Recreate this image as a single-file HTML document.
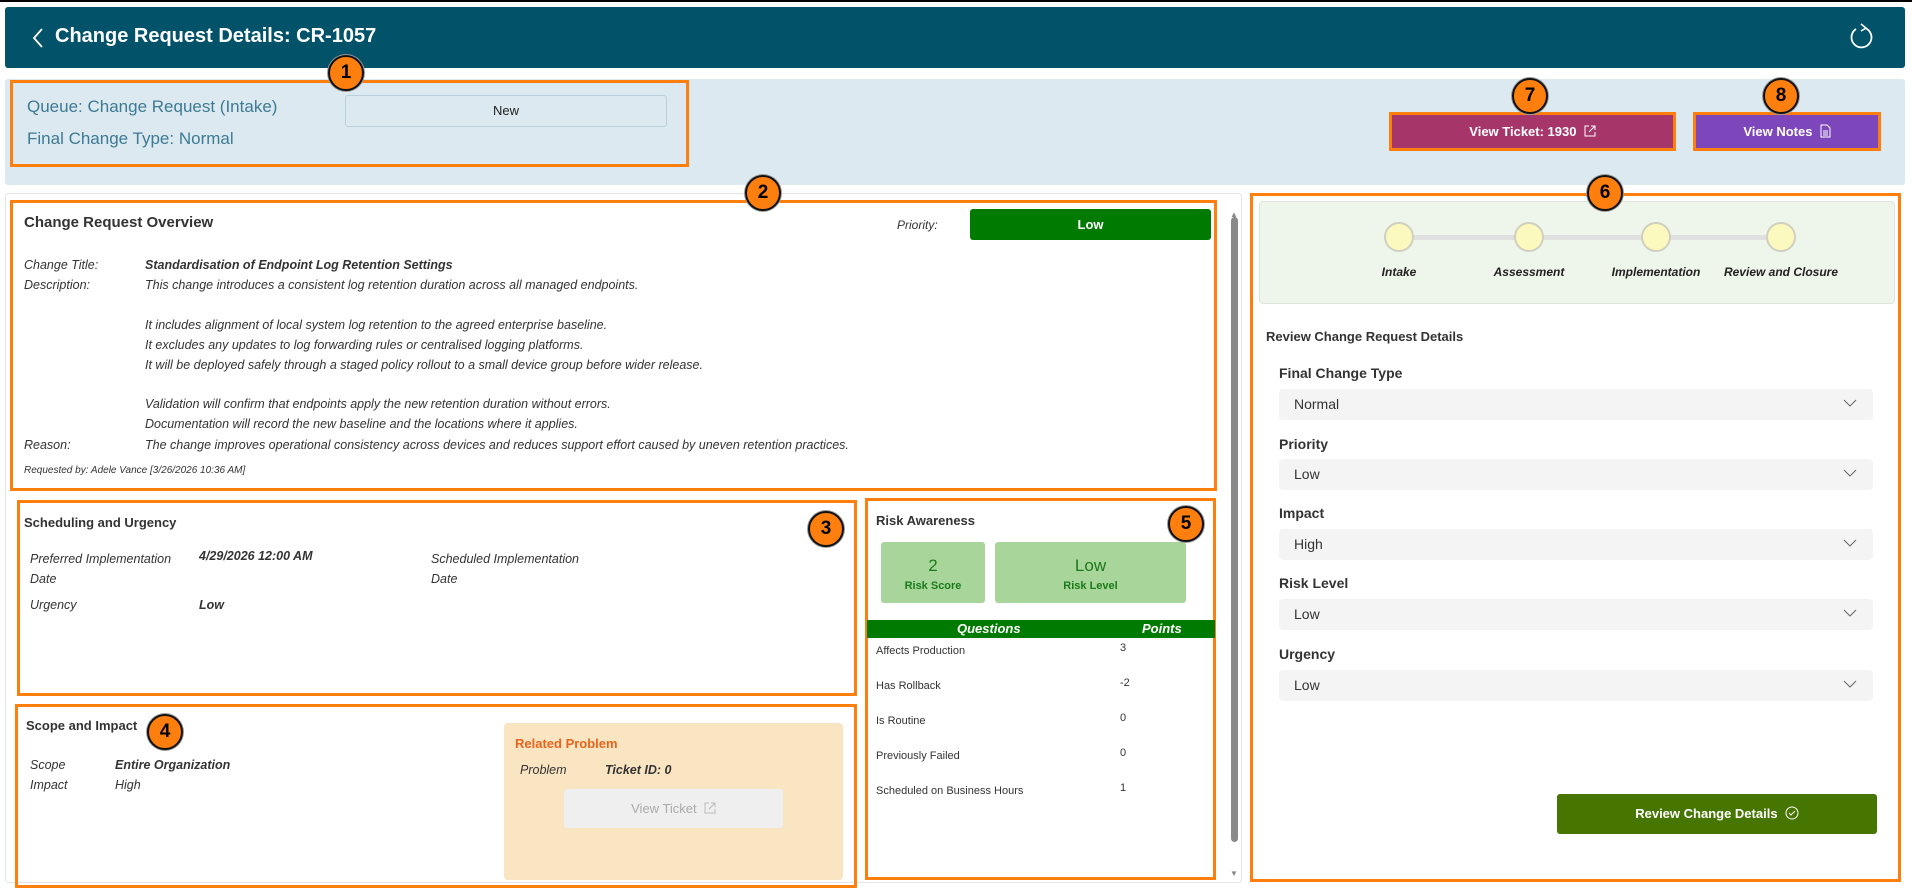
<!DOCTYPE html>
<html><head><meta charset="utf-8"><style>
*{box-sizing:border-box;margin:0;padding:0}
body{width:1912px;height:893px;background:#fff;font-family:"Liberation Sans",sans-serif;position:relative;overflow:hidden;color:#242424}
.a{position:absolute}
.ob{position:absolute;border:3px solid #ff7f0e}
.bd{position:absolute;width:36px;height:36px;border-radius:50%;background:#ff7f0e;border:2px solid #111;box-shadow:0 0 0 1px #999;font:bold 19px "Liberation Sans",sans-serif;color:#000;text-align:center;line-height:32px;z-index:5;margin:-18px 0 0 -18px}
.it{font-style:italic;font-size:12.5px;color:#333}
.dd{position:absolute;left:1279px;width:594px;height:31px;background:#f4f4f4;border-radius:4px;font-size:14px;line-height:31px;padding-left:15px;color:#333}
.dd svg{position:absolute;right:16px;top:10px}
.fl{position:absolute;left:1279px;font-size:14px;font-weight:bold;color:#333}
.st{position:absolute;width:30px;height:30px;border-radius:50%;background:#fbf9bd;border:2px solid #d0d0c0;top:222px}
.sl{position:absolute;top:265px;font-size:12px;font-style:italic;font-weight:bold;color:#222;width:160px;text-align:center}
.q{position:absolute;left:876px;font-size:11px;color:#333}
.p{position:absolute;left:1120px;font-size:11px;color:#333}
</style></head><body>
<div class="a" style="left:0;top:0;width:1912px;height:2px;background:#000"></div>
<div class="a" style="left:5px;top:7px;width:1900px;height:61px;background:#02536a;border-radius:3px"></div>
<svg class="a" style="left:32px;top:28px" width="12" height="20"><path d="M10 1 L2 10 L10 19" stroke="#fff" stroke-width="1.8" fill="none"/></svg>
<div class="a" style="left:55px;top:25px;font-size:20px;font-weight:bold;color:#fff">Change Request Details: CR-1057</div>
<svg class="a" style="left:1846px;top:22px" width="30" height="30"><path d="M10 7 A10 10 0 1 0 19 6" stroke="#fff" stroke-width="1.8" fill="none"/><path d="M15 2 L20 6 L15 9" stroke="#fff" stroke-width="1.6" fill="none"/></svg>

<div class="a" style="left:5px;top:79px;width:1900px;height:106px;background:#dce9f0;border-radius:3px"></div>
<div class="ob" style="left:10px;top:80px;width:679px;height:87px"></div>
<div class="bd" style="left:346px;top:73px">1</div>
<div class="a" style="left:27px;top:97px;font-size:17px;color:#3d7a94">Queue: Change Request (Intake)</div>
<div class="a" style="left:27px;top:129px;font-size:17px;color:#3d7a94">Final Change Type: Normal</div>
<div class="a" style="left:345px;top:95px;width:322px;height:32px;border:1px solid #b9cfdc;border-radius:3px;text-align:center;line-height:30px;font-size:13px;color:#222">New</div>
<div class="a" style="left:1389px;top:112px;width:287px;height:39px;background:#a6366a;border:3px solid #ff7f0e;color:#fff;font-size:13px;font-weight:bold;text-align:center;line-height:33px">View Ticket: 1930 &nbsp;<svg width="12" height="12" style="vertical-align:-1px"><path d="M5 1H1V11H11V7M7 1H11V5M11 1L5 7" stroke="#fff" fill="none"/></svg></div>
<div class="a" style="left:1693px;top:112px;width:188px;height:39px;background:#7d47bb;border:3px solid #ff7f0e;color:#fff;font-size:13px;font-weight:bold;text-align:center;line-height:33px">View Notes &nbsp;<svg width="11" height="14" style="vertical-align:-2px"><path d="M1 1H7L10 4V13H1Z M3 7H8M3 9H8M3 11H8" stroke="#fff" fill="none"/></svg></div>
<div class="bd" style="left:1530px;top:96px">7</div>
<div class="bd" style="left:1781px;top:96px">8</div>

<!-- left panel -->
<div class="a" style="left:5px;top:193px;width:1237px;height:690px;border:1px solid #e4e4e4;border-radius:3px"></div>
<div class="ob" style="left:10px;top:200px;width:1207px;height:291px"></div>
<div class="bd" style="left:763px;top:193px">2</div>
<div class="a" style="left:24px;top:214px;font-size:15px;font-weight:bold;color:#333">Change Request Overview</div>
<div class="a it" style="left:897px;top:218px;font-size:12px">Priority:</div>
<div class="a" style="left:970px;top:209px;width:241px;height:31px;background:#007a00;border-radius:3px;color:#fff;font-weight:bold;font-size:13px;text-align:center;line-height:31px">Low</div>
<div class="a it" style="left:24px;top:255px;line-height:20px">Change Title:<br>Description:</div>
<div class="a it" style="left:145px;top:255px;line-height:20px"><b>Standardisation of Endpoint Log Retention Settings</b><br>This change introduces a consistent log retention duration across all managed endpoints.</div>
<div class="a it" style="left:145px;top:315px;line-height:20px">It includes alignment of local system log retention to the agreed enterprise baseline.<br>It excludes any updates to log forwarding rules or centralised logging platforms.<br>It will be deployed safely through a staged policy rollout to a small device group before wider release.</div>
<div class="a it" style="left:145px;top:394px;line-height:20px">Validation will confirm that endpoints apply the new retention duration without errors.<br>Documentation will record the new baseline and the locations where it applies.</div>
<div class="a it" style="left:24px;top:438px">Reason:</div>
<div class="a it" style="left:145px;top:438px">The change improves operational consistency across devices and reduces support effort caused by uneven retention practices.</div>
<div class="a it" style="left:24px;top:465px;font-size:10px">Requested by: Adele Vance [3/26/2026 10:36 AM]</div>
<div class="a" style="left:1230px;top:210px;font-size:8px;color:#888">▲</div>
<div class="a" style="left:1231px;top:217px;width:7px;height:625px;background:#8a8a8a;border-radius:4px"></div>
<div class="a" style="left:1230px;top:869px;font-size:8px;color:#888">▼</div>

<div class="ob" style="left:17px;top:500px;width:840px;height:196px"></div>
<div class="bd" style="left:826px;top:529px">3</div>
<div class="a" style="left:24px;top:515px;font-size:13px;font-weight:bold;color:#333">Scheduling and Urgency</div>
<div class="a it" style="left:30px;top:549px;line-height:20px">Preferred Implementation<br>Date</div>
<div class="a it" style="left:199px;top:549px"><b>4/29/2026 12:00 AM</b></div>
<div class="a it" style="left:431px;top:549px;line-height:20px">Scheduled Implementation<br>Date</div>
<div class="a it" style="left:30px;top:598px">Urgency</div>
<div class="a it" style="left:199px;top:598px"><b>Low</b></div>

<div class="ob" style="left:15px;top:704px;width:842px;height:184px"></div>
<div class="a" style="left:26px;top:718px;font-size:13px;font-weight:bold;color:#333">Scope and Impact</div>
<div class="bd" style="left:165px;top:732px">4</div>
<div class="a it" style="left:30px;top:755px;line-height:20px">Scope<br>Impact</div>
<div class="a it" style="left:115px;top:755px;line-height:20px"><b>Entire Organization</b><br>High</div>
<div class="a" style="left:504px;top:723px;width:339px;height:157px;background:#fae5c3;border-radius:4px"></div>
<div class="a" style="left:515px;top:736px;font-size:13px;font-weight:bold;color:#e8641c">Related Problem</div>
<div class="a it" style="left:520px;top:763px">Problem</div>
<div class="a it" style="left:605px;top:763px"><b>Ticket ID: 0</b></div>
<div class="a" style="left:564px;top:789px;width:219px;height:39px;background:#efefef;border-radius:3px;color:#aaa;font-size:13px;text-align:center;line-height:39px">View Ticket &nbsp;<svg width="12" height="12" style="vertical-align:-1px"><path d="M5 1H1V11H11V7M7 1H11V5M11 1L5 7" stroke="#bbb" fill="none"/></svg></div>

<div class="ob" style="left:865px;top:498px;width:351px;height:382px"></div>
<div class="bd" style="left:1186px;top:524px">5</div>
<div class="a" style="left:876px;top:513px;font-size:13px;font-weight:bold;color:#333">Risk Awareness</div>
<div class="a" style="left:881px;top:542px;width:104px;height:61px;background:#a8d69a;border-radius:3px;text-align:center;color:#1b7a1b"><div style="font-size:17px;margin-top:14px">2</div><div style="font-size:11px;font-weight:bold;margin-top:4px">Risk Score</div></div>
<div class="a" style="left:995px;top:542px;width:191px;height:61px;background:#a8d69a;border-radius:3px;text-align:center;color:#1b7a1b"><div style="font-size:17px;margin-top:14px">Low</div><div style="font-size:11px;font-weight:bold;margin-top:4px">Risk Level</div></div>
<div class="a" style="left:867px;top:620px;width:348px;height:18px;background:#007a00;color:#fff;font-size:13px;font-style:italic;font-weight:bold;line-height:18px"><span class="a" style="left:90px">Questions</span><span class="a" style="left:275px">Points</span></div>
<div class="q" style="top:645px">Affects Production</div><div class="p" style="top:642px">3</div>
<div class="q" style="top:680px">Has Rollback</div><div class="p" style="top:677px">-2</div>
<div class="q" style="top:715px">Is Routine</div><div class="p" style="top:712px">0</div>
<div class="q" style="top:750px">Previously Failed</div><div class="p" style="top:747px">0</div>
<div class="q" style="top:785px">Scheduled on Business Hours</div><div class="p" style="top:782px">1</div>

<!-- right -->
<div class="ob" style="left:1250px;top:193px;width:651px;height:689px"></div>
<div class="bd" style="left:1605px;top:193px">6</div>
<div class="a" style="left:1259px;top:201px;width:636px;height:103px;background:#eef5ea;border:1px solid #dde6da;border-radius:4px"></div>
<div class="a" style="left:1414px;top:235px;width:368px;height:5px;background:#e0e0e0"></div>
<div class="st" style="left:1384px"></div><div class="st" style="left:1514px"></div><div class="st" style="left:1641px"></div><div class="st" style="left:1766px"></div>
<div class="sl" style="left:1319px">Intake</div><div class="sl" style="left:1449px">Assessment</div><div class="sl" style="left:1576px">Implementation</div><div class="sl" style="left:1701px">Review and Closure</div>
<div class="a" style="left:1266px;top:329px;font-size:13px;font-weight:bold;color:#333">Review Change Request Details</div>
<div class="fl" style="top:365px">Final Change Type</div>
<div class="dd" style="top:389px">Normal<svg width="14" height="9"><path d="M1 1L7 7L13 1" stroke="#666" fill="none"/></svg></div>
<div class="fl" style="top:436px">Priority</div>
<div class="dd" style="top:459px">Low<svg width="14" height="9"><path d="M1 1L7 7L13 1" stroke="#666" fill="none"/></svg></div>
<div class="fl" style="top:505px">Impact</div>
<div class="dd" style="top:529px">High<svg width="14" height="9"><path d="M1 1L7 7L13 1" stroke="#666" fill="none"/></svg></div>
<div class="fl" style="top:575px">Risk Level</div>
<div class="dd" style="top:599px">Low<svg width="14" height="9"><path d="M1 1L7 7L13 1" stroke="#666" fill="none"/></svg></div>
<div class="fl" style="top:646px">Urgency</div>
<div class="dd" style="top:670px">Low<svg width="14" height="9"><path d="M1 1L7 7L13 1" stroke="#666" fill="none"/></svg></div>
<div class="a" style="left:1557px;top:794px;width:320px;height:40px;background:#467500;border-radius:3px;color:#fff;font-size:13px;font-weight:bold;text-align:center;line-height:40px">Review Change Details &nbsp;<svg width="14" height="14" style="vertical-align:-2px"><circle cx="7" cy="7" r="6" stroke="#fff" fill="none"/><path d="M4 7L6 9L10 5" stroke="#fff" fill="none"/></svg></div>
</body></html>
